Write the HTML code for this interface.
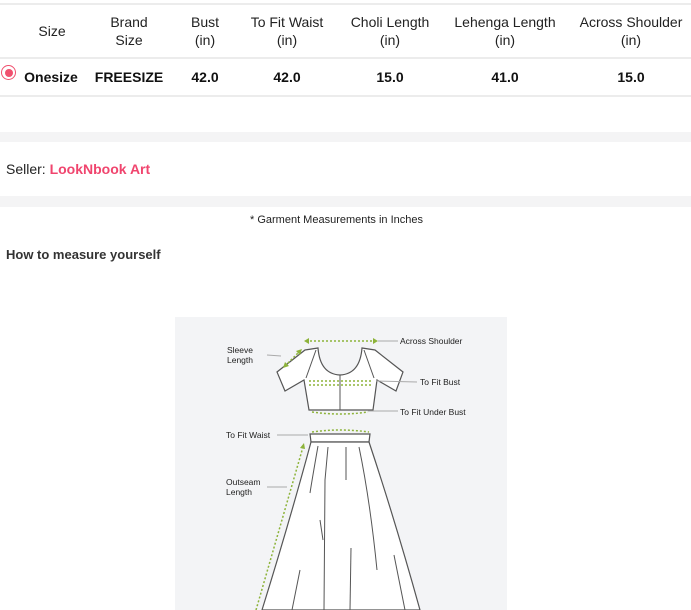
<!DOCTYPE html>
<html><head><meta charset="utf-8"><style>
body{margin:0;width:691px;height:610px;overflow:hidden;background:#fff;font-family:"Liberation Sans",sans-serif;color:#111;position:relative}
.a{position:absolute;white-space:nowrap}
.h{font-size:14px;line-height:18px;text-align:center;transform:translateX(-50%);color:#222}
.d{font-size:14px;font-weight:bold;transform:translateX(-50%);top:68px;line-height:18px}
.line{position:absolute;left:0;width:691px;height:2px;background:#ececec}
.band{position:absolute;left:0;width:691px;background:#f4f4f5}
</style></head><body>
<div class="line" style="top:3px"></div>
<div class="a h" style="left:52px;top:22px">Size</div>
<div class="a h" style="left:129px;top:13px">Brand<br>Size</div>
<div class="a h" style="left:205px;top:13px">Bust<br>(in)</div>
<div class="a h" style="left:287px;top:13px">To Fit Waist<br>(in)</div>
<div class="a h" style="left:390px;top:13px">Choli Length<br>(in)</div>
<div class="a h" style="left:505px;top:13px">Lehenga Length<br>(in)</div>
<div class="a h" style="left:631px;top:13px">Across Shoulder<br>(in)</div>
<div class="line" style="top:57px"></div>
<div class="a" style="left:1px;top:65px;width:15px;height:15px;box-sizing:border-box;border:1.5px solid #f0506e;border-radius:50%"></div>
<div class="a" style="left:4.5px;top:68.5px;width:8px;height:8px;background:#f0506e;border-radius:50%"></div>
<div class="a d" style="left:51px">Onesize</div>
<div class="a d" style="left:129px">FREESIZE</div>
<div class="a d" style="left:205px">42.0</div>
<div class="a d" style="left:287px">42.0</div>
<div class="a d" style="left:390px">15.0</div>
<div class="a d" style="left:505px">41.0</div>
<div class="a d" style="left:631px">15.0</div>
<div class="line" style="top:95px"></div>
<div class="band" style="top:132px;height:10px"></div>
<div class="a" style="left:6px;top:161px;font-size:14px;color:#222">Seller: <b style="color:#f0456e">LookNbook Art</b></div>
<div class="band" style="top:196px;height:11px"></div>
<div class="a" style="left:250px;top:214px;font-size:11px;color:#222">* Garment Measurements in Inches</div>
<div class="a" style="left:6px;top:247px;font-size:13px;font-weight:bold;color:#333">How to measure yourself</div>
<svg class="a" style="left:0;top:0" width="691" height="610" viewBox="0 0 691 610">
<rect x="175" y="317" width="332" height="293" fill="#f3f4f6"/>
<g fill="#fff" stroke="#555" stroke-width="1.2">
<path d="M305 350 L318 348 Q320 374 340 375 Q360 374 362 348 L375 350 L403 372 L396 391 L377 380 L373 410 L309 410 L304 380 L285 391 L277 372 Z"/>
<path d="M310 434 L370 434 L369 442 L311 442 Z"/>
<path d="M311 442 L369 442 Q395 520 420 610 L262 610 Q290 520 311 442 Z"/>
</g>
<g fill="none" stroke="#555" stroke-width="1">
<path d="M340 375 L340 410"/><path d="M316 350 L306 378"/><path d="M364 350 L374 378"/>
<path d="M318 446 Q312 480 310 493"/><path d="M328 447 L325 480 L324 610"/><path d="M346 447 L346 480"/><path d="M359 447 Q370 500 377 570"/>
<path d="M320 520 L323 540"/><path d="M351 548 L350 610"/><path d="M300 570 L292 610"/><path d="M394 555 L405 610"/>
</g>
<g fill="none" stroke="#8db33a" stroke-width="1.5" stroke-dasharray="2,2">
<path d="M306 341 L376 341"/><path d="M285 366 L299 352"/>
<path d="M309 381 L373 381"/><path d="M309 385 L373 385"/>
<path d="M312 412 Q340 416 368 412"/><path d="M312 432 Q340 428 369 432"/>
<path d="M256 610 L303 447"/>
</g>
<g fill="#8db33a"><path d="M304 341 l5 -3 v6z"/><path d="M378 341 l-5 -3 v6z"/><path d="M283 368 l2 -6 4 4z"/><path d="M302 349 l-2 6 -4 -4z"/><path d="M304 443 l1 6 -5 -1z"/></g>
<g stroke="#aaa" stroke-width="1"><path d="M378 341 L398 341"/><path d="M267 355 L281 356"/><path d="M376 381 L417 382"/><path d="M368 411 L398 411"/><path d="M277 435 L308 435"/><path d="M267 487 L287 487"/></g>
<g font-family="Liberation Sans,sans-serif" font-size="8.5" fill="#222">
<text x="400" y="344">Across Shoulder</text><text x="227" y="353">Sleeve</text><text x="227" y="363">Length</text>
<text x="420" y="385">To Fit Bust</text><text x="400" y="415">To Fit Under Bust</text>
<text x="226" y="438">To Fit Waist</text><text x="226" y="485">Outseam</text><text x="226" y="495">Length</text>
</g>
</svg>
</body></html>
